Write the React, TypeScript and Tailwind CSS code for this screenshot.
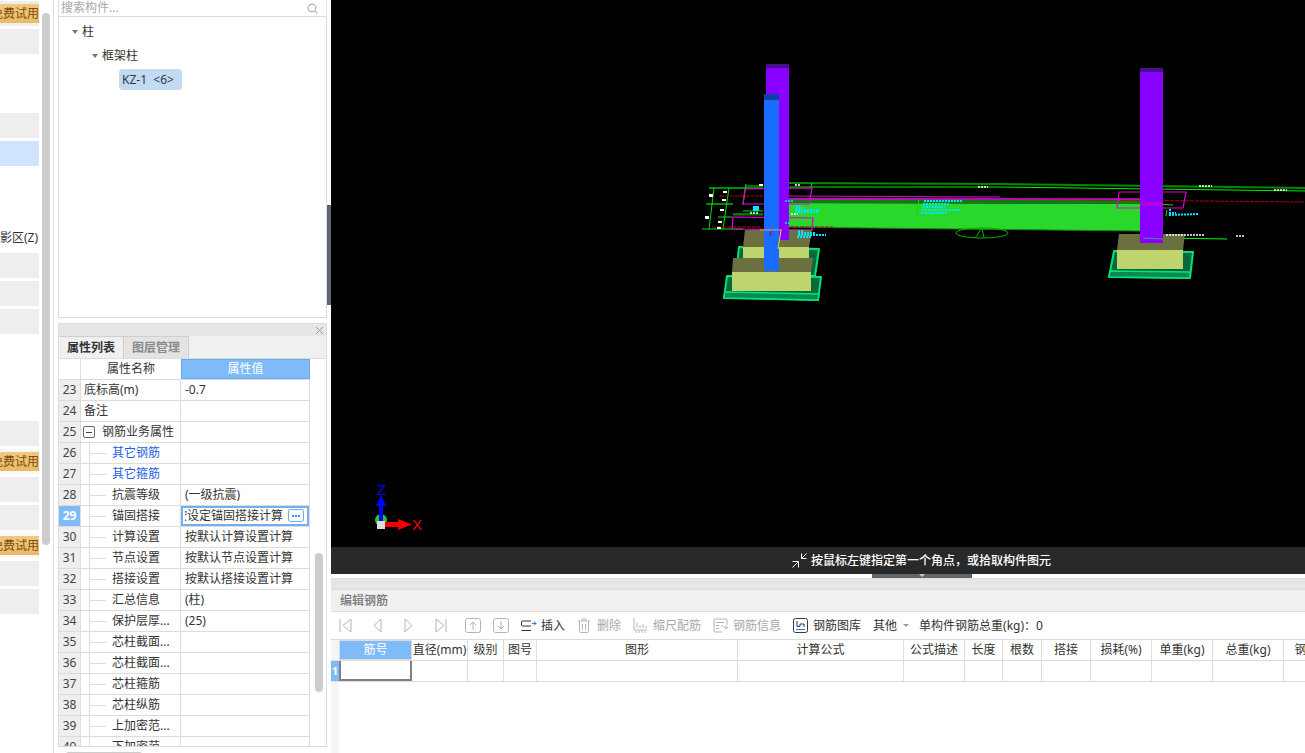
const sideRows = [
  "badge", "gray", "", "", "gray", "blue", "", "", "text", "gray", "gray", "gray", "", "", "", "gray",
  "badge2", "gray", "gray", "badge2", "gray", "gray",
];

type PropRow = { no: number; name: string; value?: string; kind?: "top" | "group" | "link" | "child" };

const propRows: PropRow[] = [
  { no: 23, name: "底标高(m)", value: "-0.7", kind: "top" },
  { no: 24, name: "备注", kind: "top" },
  { no: 25, name: "钢筋业务属性", kind: "group" },
  { no: 26, name: "其它钢筋", kind: "link" },
  { no: 27, name: "其它箍筋", kind: "link" },
  { no: 28, name: "抗震等级", value: "(一级抗震)" },
  { no: 29, name: "锚固搭接", value: "按设定锚固搭接计算" },
  { no: 30, name: "计算设置", value: "按默认计算设置计算" },
  { no: 31, name: "节点设置", value: "按默认节点设置计算" },
  { no: 32, name: "搭接设置", value: "按默认搭接设置计算" },
  { no: 33, name: "汇总信息", value: "(柱)" },
  { no: 34, name: "保护层厚...", value: "(25)" },
  { no: 35, name: "芯柱截面..." },
  { no: 36, name: "芯柱截面..." },
  { no: 37, name: "芯柱箍筋" },
  { no: 38, name: "芯柱纵筋" },
  { no: 39, name: "上加密范..." },
  { no: 40, name: "下加密范..." },
];

const rebarCols = [
  { label: "筋号", w: "w-[73px]" },
  { label: "直径(mm)", w: "w-[56px]" },
  { label: "级别", w: "w-[36px]" },
  { label: "图号", w: "w-[33px]" },
  { label: "图形", w: "w-[201px]" },
  { label: "计算公式", w: "w-[166px]" },
  { label: "公式描述", w: "w-[61px]" },
  { label: "长度", w: "w-[38px]" },
  { label: "根数", w: "w-[39px]" },
  { label: "搭接", w: "w-[49px]" },
  { label: "损耗(%)", w: "w-[61px]" },
  { label: "单重(kg)", w: "w-[61px]" },
  { label: "总重(kg)", w: "w-[71px]" },
  { label: "钢筋归类", w: "w-[70px]" },
];

const LeftStrip = () => (
  <div className="relative w-[54px] shrink-0 h-full border-r border-[#dcdcdc] bg-white">
    <div className="w-[39px] pt-px flex flex-col gap-[3px] overflow-hidden">
      {sideRows.map((kind, i) => (
        <div
          key={i}
          className={
            "h-[25px] shrink-0 flex items-center justify-end overflow-hidden whitespace-nowrap text-xs " +
            (kind === "gray" || kind === "badge" ? "bg-[#eeeeee] " : "") +
            (kind === "blue" ? "bg-[#cfe5ff] " : "") +
            (kind === "badge2" ? "bg-[#f7f7f7] " : "")
          }
        >
          {(kind === "badge" || kind === "badge2") && (
            <span className="h-[19px] w-full flex items-center justify-end bg-gradient-to-b from-[#f0c97f] to-[#e9bb66] text-[#7c4a10] leading-none overflow-hidden">
              <span className="shrink-0">免费试用</span>
            </span>
          )}
          {kind === "text" && <span className="shrink-0 mr-px text-[#333]">影区(Z)</span>}
        </div>
      ))}
    </div>
    <div className="absolute left-[42px] top-[13px] w-[8px] h-[532px] rounded bg-[#cccccc]" />
  </div>
);

const TreePanel = () => (
  <>
    <div className="h-[16px] flex items-center justify-between border-x border-[#e2e2e2] pl-[2px] pr-[8px] text-xs text-[#a8a8a8]">
      <span>搜索构件...</span>
      <svg width="11" height="11" viewBox="0 0 11 11" fill="none" stroke="#b0b0b0" strokeWidth="1.2">
        <circle cx="5" cy="5" r="3.8" />
        <path d="M8 8l2.4 2.4" />
      </svg>
    </div>
    <div className="h-[302px] border border-[#dcdcdc] text-xs text-[#333] relative">
      <div className="pl-[13px] h-[19px] flex items-center gap-[4px] mt-[5px]">
        <span className="w-0 h-0 border-x-[3px] border-x-transparent border-t-[4px] border-t-[#777]" />
        <span>柱</span>
      </div>
      <div className="pl-[33px] h-[19px] flex items-center gap-[4px] mt-[5px]">
        <span className="w-0 h-0 border-x-[3px] border-x-transparent border-t-[4px] border-t-[#777]" />
        <span>框架柱</span>
      </div>
      <div className="ml-[60px] mt-[4px] w-[63px] h-[21px] pl-[3px] flex items-center rounded bg-[#c3daf3] whitespace-pre text-[#2b3a4a]">
        KZ-1{"  "}&lt;6&gt;
      </div>
    </div>
  </>
);

const PropValue = ({ row }: { row: PropRow }) => {
  if (row.no === 29) {
    return (
      <div className="relative h-full w-full border-2 border-[#6fb0f5] bg-white flex items-center">
        <div className="ml-[2px] flex-1 overflow-hidden">
          <div className="whitespace-nowrap ml-[-10px]">{row.value}</div>
        </div>
        <span className="absolute right-[3px] top-[1px] w-[16px] h-[13px] bg-white border border-[#6fb0f5] rounded-[2px] flex items-center justify-center gap-px">
          <i className="w-[2px] h-[2px] bg-[#3d8df0]" />
          <i className="w-[2px] h-[2px] bg-[#3d8df0]" />
          <i className="w-[2px] h-[2px] bg-[#3d8df0]" />
        </span>
      </div>
    );
  }
  return <div className="pl-[4px] whitespace-nowrap">{row.value}</div>;
};

const PropName = ({ row }: { row: PropRow }) => {
  if (row.kind === "top") return <span className="pl-[3px]">{row.name}</span>;
  if (row.kind === "group") {
    return (
      <div className="flex items-center pl-[2px] gap-[7px]">
        <span className="w-[12px] h-[12px] border border-[#666] rounded-[2px] flex items-center justify-center">
          <i className="w-[6px] h-px bg-[#444]" />
        </span>
        <span>{row.name}</span>
      </div>
    );
  }
  return (
    <div className="flex items-center h-full">
      <span className="ml-[8px] w-px h-full bg-[#dddddd]" />
      <span className="w-[16px] h-px bg-[#dddddd]" />
      <span className={"ml-[6px] " + (row.kind === "link" ? "text-[#1f5fe0]" : "")}>{row.name}</span>
    </div>
  );
};

const PropertyPanel = () => (
  <div className="mt-[5px] h-[424px] flex flex-col border-x border-b border-t border-[#dcdcdc] text-xs text-[#333] overflow-hidden">
    <div className="h-[12px] shrink-0 bg-[#e6e6e6] flex items-center justify-end pr-[2px]">
      <svg width="9" height="9" viewBox="0 0 9 9" stroke="#999" strokeWidth="1">
        <path d="M1 1l7 7M8 1l-7 7" />
      </svg>
    </div>
    <div className="h-[23px] shrink-0 bg-[#f0f0f0] flex border-b border-[#dcdcdc]">
      <div className="w-[65px] border-t border-r border-[#cfcfcf] flex items-center justify-center font-bold text-[#333]">属性列表</div>
      <div className="w-[65px] border-t border-r border-[#cfcfcf] bg-[#e4e4e4] flex items-center justify-center font-bold text-[#8a8a8a]">图层管理</div>
    </div>
    <div className="flex-1 flex min-h-0">
      <div className="w-[251px] shrink-0 overflow-hidden">
        <div className="h-[21px] flex border-b border-[#dcdcdc]">
          <div className="w-[22px] border-r border-[#dcdcdc]" />
          <div className="w-[100px] flex items-center justify-center">属性名称</div>
          <div className="w-[129px] bg-[#80bbf9] border border-[#67a9f0] flex items-center justify-center text-white">属性值</div>
        </div>
        {propRows.map((row) => (
          <div key={row.no} className="h-[21px] flex items-stretch border-b border-[#dcdcdc]">
            <div
              className={
                "w-[22px] shrink-0 flex items-center justify-center border-r border-[#dcdcdc] " +
                (row.no === 29 ? "bg-[#7fbaf9] text-white font-bold" : "bg-[#eeeeee] text-[#444]")
              }
            >
              {row.no}
            </div>
            <div className="w-[100px] shrink-0 flex items-center border-r border-[#dcdcdc] whitespace-nowrap overflow-hidden">
              <PropName row={row} />
            </div>
            <div className="w-[129px] shrink-0 flex items-center border-r border-[#dcdcdc] overflow-hidden">
              <PropValue row={row} />
            </div>
          </div>
        ))}
      </div>
      <div className="flex-1 pl-[5px] pt-[194px]">
        <div className="w-[8px] h-[139px] rounded bg-[#cccccc]" />
      </div>
    </div>
  </div>
);

const Dash = ({ d, c = "#00e5ff", w = 1.5 }: { d: string; c?: string; w?: number }) => (
  <path d={d} stroke={c} strokeWidth={w} strokeDasharray="2 1" fill="none" />
);

const ModelView = () => (
  <div className="h-[547px] bg-black overflow-hidden">
    <svg width="974" height="547" viewBox="331 0 974 547" className="block">
      {/* beam */}
      <polygon points="788,198 1140,199 1140,204 788,203" fill="#127a12" />
      <polygon points="780,203 1140,204 1140,231 780,227" fill="#29d82a" />
      <path d="M780,227 L1140,231" stroke="#128a12" strokeWidth="1" />
      {/* green axis lines */}
      <g stroke="#00e000" strokeWidth="1" fill="none">
        <path d="M709,188 L763,188" stroke="#008a00" strokeWidth="2" />
        <path d="M745,186 L763,186" />
        <path d="M706,204 L733,204" stroke="#008a00" strokeWidth="2" />
        <path d="M702,229 L743,229" />
        <path d="M718,217 L732,217" />
        <path d="M733,214 L763,214" />
        <path d="M733,215 L763,215" stroke="#008a00" />
        <path d="M743,211 L763,211" />
        <path d="M714,188 L709,229" />
        <path d="M729,188 L723,229" />
        <path d="M746,184 L743,205" />
        <path d="M788,187 L1000,187 L1305,191" stroke="#00f000" />
        <path d="M788,183 L1000,184 L1305,188" stroke="#008a00" strokeWidth="2" />
        <path d="M812,183 L811,188" />
        <path d="M919,199 L917,214" />
        <path d="M780,214 L790,214" />
        <path d="M780,223 L790,223" />
        <path d="M1167,210 L1166,216" />
        <path d="M1163,238 L1227,239" stroke="#00ff00" />
        <path d="M1156,204 L1173,205" />
        <ellipse cx="982" cy="233" rx="26" ry="5" stroke="#00b000" />
        <path d="M975,238 L982,228 L984,238" stroke="#00b000" />
        <path d="M795,230 L794,238" />
      </g>
      {/* dark red lines */}
      <g stroke="#b00010" strokeWidth="1" fill="none" strokeDasharray="4 1">
        <path d="M720,196 L763,196" />
        <path d="M712,227 L763,227" />
        <path d="M780,227 L833,227" />
        <path d="M1000,199 L1305,202" />
        <path d="M1151,203 L1148,215" />
      </g>
      {/* magenta outlines */}
      <g stroke="#e000d8" strokeWidth="1.2" fill="none">
        <polygon points="745,189 812,188 809,204 743,204" />
        <polygon points="733,217 813,218 812,230 732,229" />
        <polygon points="1119,192 1186,192 1183,208 1117,208" />
        <path d="M782,199 L1140,199" strokeWidth="1.5" />
        <path d="M782,196 L1000,197" />
      </g>
      {/* left footing */}
      <polygon points="727,276 821,277 818,300 724,298" fill="#06693a" stroke="#00e27a" strokeWidth="2" strokeLinejoin="round" />
      <polygon points="725,292 819,294 818,300 724,298" fill="#0a8a50" stroke="#00e27a" strokeWidth="1.5" strokeLinejoin="round" />
      <polygon points="739,247 819,249 815,276 736,274" fill="#06693a" stroke="#00e27a" strokeWidth="2" strokeLinejoin="round" />
      <polygon points="745,230 812,230 809,247 743,247" fill="#6c6f40" />
      <rect x="743" y="247" width="66" height="12" fill="#bdd56c" />
      <polygon points="733,258 813,258 811,272 732,272" fill="#6c6f40" />
      <rect x="732" y="272" width="79" height="19" fill="#bdd56c" />
      {/* right footing */}
      <polygon points="1114,251 1193,252 1190,278 1109,277" fill="#06693a" stroke="#00e27a" strokeWidth="2" strokeLinejoin="round" />
      <polygon points="1110,271 1190,272 1190,278 1109,277" fill="#0a8a50" stroke="#00e27a" strokeWidth="1.5" strokeLinejoin="round" />
      <polygon points="1119,234 1185,234 1183,250 1117,250" fill="#6c6f40" />
      <rect x="1117" y="250" width="66" height="19" fill="#bdd56c" />
      {/* columns */}
      <rect x="766" y="64" width="23" height="4" fill="#45108a" />
      <rect x="766" y="68" width="23" height="172" fill="#8800ff" />
      <rect x="1140" y="68" width="23" height="4" fill="#45108a" />
      <rect x="1140" y="72" width="23" height="171" fill="#8800ff" />
      <rect x="764" y="94" width="15" height="6" fill="#0c3fa5" />
      <rect x="764" y="100" width="15" height="171" fill="#1a6cff" />
      <path d="M760,230 L782,230" stroke="#e0a060" strokeWidth="1" />
      <path d="M781,230 L778,249" stroke="#e0e000" strokeWidth="1" />
      <path d="M771,231 L770,236" stroke="#c00010" strokeWidth="1" />
      <path d="M1143,238 L1163,239" stroke="#5a8a9a" strokeWidth="1" />
      <polygon points="1140,202 1163,202 1163,206 1140,206" fill="#b000e0" />
      {/* cad notes */}
      <rect x="753" y="206" width="6" height="5" fill="#00e5ff" />
      <Dash d="M796,206 L800,206 M796,208 L803,208 M795,210 L820,210 M795,212 L818,212" w={2} />
      <Dash d="M798,231 L803,231 M798,233 L815,233 M798,235 L826,235 M797,237 L812,237" w={2} />
      <Dash d="M924,201 L963,201 M923,204 L950,204 M923,207 L945,207 M922,210 L960,210 M921,213 L948,213" w={2} />
      <Dash d="M1169,210 L1172,210 M1169,213 L1176,213 M1169,215 L1198,214" w={2} />
      <Dash d="M785,201 L793,201 M785,223 L790,223" />
      <Dash d="M750,213 L758,213 M791,214 L798,214" c="#ffffff" />
      <Dash d="M795,185 L800,185 M978,187 L988,187 M1199,186 L1212,186 M1274,190 L1287,190" c="#ffffff" />
      <Dash d="M1166,235 L1205,235 M1236,236 L1244,236" c="#ffffff" />
      <g fill="#ffffff">
        <rect x="709" y="194" width="4" height="3" />
        <rect x="723" y="191" width="4" height="2" />
        <rect x="722" y="199" width="4" height="2" />
        <rect x="720" y="209" width="4" height="2" />
        <rect x="705" y="216" width="4" height="3" />
        <rect x="718" y="221" width="4" height="2" />
        <rect x="717" y="227" width="4" height="2" />
        <rect x="759" y="184" width="4" height="2" />
      </g>
      {/* axis gizmo */}
      <ellipse cx="381" cy="520" rx="6" ry="6" fill="#1fc83a" />
      <polygon points="379,503 383,503 383,521 379,521" fill="#0000ff" />
      <polygon points="381,495 386,506 376,506" fill="#0000ff" />
      <rect x="385" y="522" width="14" height="5" fill="#ee0000" />
      <polygon points="398,519 412,524.5 398,530" fill="#ee0000" />
      <rect x="377" y="521" width="8" height="8" fill="#dddddd" />
      <text x="377" y="495" fill="#0000ff" fontSize="15" fontFamily="Liberation Sans, sans-serif">Z</text>
      <text x="412" y="530" fill="#ee0000" fontSize="15" fontFamily="Liberation Sans, sans-serif">X</text>
    </svg>
  </div>
);

const StatusBar = () => (
  <div className="h-[27px] bg-[#292929] flex items-center pl-[461px] text-xs font-medium text-white">
    <svg width="15" height="15" viewBox="0 0 15 15" stroke="#fff" strokeWidth="1" fill="none" className="mr-[4px]">
      <path d="M14.5 0.5L9.5 5.5M9.5 0.5v5h5M0.5 14.5l6-6M0.5 8.5h6v6" />
    </svg>
    按鼠标左键指定第一个角点，或拾取构件图元
  </div>
);

const NavIcon = ({ d, cls }: { d: string; cls: string }) => (
  <svg width="14" height="15" viewBox="0 0 14 15" fill="none" stroke="#b5b5b5" strokeWidth="1" className={cls}>
    <path d={d} />
  </svg>
);

const BoxArrow = ({ up, cls }: { up?: boolean; cls: string }) => (
  <svg width="16" height="15" viewBox="0 0 16 15" fill="none" stroke="#b5b5b5" strokeWidth="1" className={cls}>
    <rect x="0.5" y="0.5" width="15" height="14" rx="2" />
    <path d={up ? "M8 12V4M5 7l3-3 3 3" : "M8 3v8M5 8l3 3 3-3"} />
  </svg>
);

const RebarToolbar = () => (
  <div className="h-[27px] flex items-center text-xs whitespace-nowrap text-[#333]">
    <NavIcon d="M1 1v13M12 1L4 7.5l8 6.5z" cls="ml-[8px]" />
    <NavIcon d="M10 1L3 7.5l7 6.5z" cls="ml-[18px]" />
    <NavIcon d="M4 1l7 6.5-7 6.5z" cls="ml-[16px]" />
    <NavIcon d="M2 1l8 6.5-8 6.5zM12 1v13" cls="ml-[19px]" />
    <BoxArrow up cls="ml-[17px]" />
    <BoxArrow cls="ml-[12px]" />
    <svg width="16" height="12" viewBox="0 0 16 12" fill="none" stroke="#333" className="ml-[12px]">
      <path d="M10 1H1.5a1 1 0 00-1 1v3a1 1 0 001 1H10M0.5 10.5H10" />
      <path d="M11 3.5h4M13 1.5l2 2-2 2" stroke="#1f7ae0" />
    </svg>
    <span className="ml-[4px]">插入</span>
    <svg width="12" height="15" viewBox="0 0 12 15" fill="none" stroke="#b5b5b5" className="ml-[13px]">
      <path d="M0 3h12M4 3V1h4v2M1.5 3v10.5a1 1 0 001 1h7a1 1 0 001-1V3M4.5 6v6M7.5 6v6" />
    </svg>
    <span className="ml-[7px] text-[#a8a8a8]">删除</span>
    <svg width="14" height="15" viewBox="0 0 14 15" fill="none" stroke="#b5b5b5" className="ml-[12px]">
      <path d="M1 0v12h13M4 5v5M7 7v3M10 6v4M13 8v2" />
      <path d="M2 14h12" strokeDasharray="2 1" />
    </svg>
    <span className="ml-[6px] text-[#a8a8a8]">缩尺配筋</span>
    <svg width="15" height="15" viewBox="0 0 15 15" fill="none" stroke="#b5b5b5" className="ml-[12px]">
      <path d="M14 7V2a1 1 0 00-1-1H2a1 1 0 00-1 1v11a1 1 0 001 1h7M3 4.5h8M3 7.5h3M3 10.5h3M8 8h3M11 9l2 2 2-2M13 11V7.5" />
    </svg>
    <span className="ml-[5px] text-[#a8a8a8]">钢筋信息</span>
    <svg width="15" height="15" viewBox="0 0 15 15" fill="none" stroke="#2f3b52" className="ml-[12px]">
      <rect x="0.5" y="0.5" width="14" height="14" rx="2" />
      <path d="M4 3v5.5h3M7 8.5V6h4v3" />
      <path d="M3 11.5h9" stroke="#1f7ae0" />
    </svg>
    <span className="ml-[5px]">钢筋图库</span>
    <span className="ml-[12px]">其他</span>
    <span className="ml-[6px] w-0 h-0 border-x-[3px] border-x-transparent border-t-[3px] border-t-[#999]" />
    <span className="ml-[10px]">单构件钢筋总重(kg)：0</span>
  </div>
);

const RebarPanel = () => (
  <div className="flex-1 min-h-0 flex flex-col overflow-hidden">
    <div className="h-[4px] shrink-0 bg-white">
      <div className="ml-[541px] w-[100px] h-full bg-[#5e6670] flex justify-center">
        <i className="w-0 h-0 border-x-[3px] border-x-transparent border-t-[3px] border-t-[#c8c8c8]" />
      </div>
    </div>
    <div className="h-[12px] shrink-0 bg-[#e6e6e6] border-y border-[#dcdcdc]" />
    <div className="h-[22px] shrink-0 bg-[#f0f0f0] border-b border-[#dcdcdc] pl-[9px] flex items-center text-xs font-medium text-[#777]">
      编辑钢筋
    </div>
    <RebarToolbar />
    <div className="flex-1 flex flex-col overflow-hidden text-xs text-[#333] border-t border-[#dcdcdc]">
      <div className="h-[21px] flex whitespace-nowrap border-b border-[#dcdcdc]">
        <div className="w-[8px] shrink-0 bg-[#f5f5f5]" />
        {rebarCols.map((c, i) => (
          <div
            key={c.label}
            className={
              c.w +
              " shrink-0 flex items-center justify-center border-r border-[#dcdcdc] " +
              (i === 0 ? "bg-[#80bbf9] text-white border border-[#67a9f0]" : "")
            }
          >
            {c.label}
          </div>
        ))}
      </div>
      <div className="h-[21px] flex border-b border-[#dcdcdc]">
        <div className="w-[8px] shrink-0 bg-[#7fbaf9] text-white font-bold text-[11px] flex items-center justify-center">1</div>
        {rebarCols.map((c, i) => (
          <div
            key={c.label}
            className={c.w + " shrink-0 " + (i === 0 ? "border-2 border-[#808080] border-t-0" : "border-r border-[#dcdcdc]")}
          />
        ))}
      </div>
      <div className="flex-1 w-[8px] bg-[#f5f5f5]" />
    </div>
  </div>
);

export default function App() {
  return (
    <div className="w-[1305px] h-[753px] flex overflow-hidden bg-white font-['Noto_Sans','Noto_Sans_CJK_SC',sans-serif]">
      <LeftStrip />
      <div className="ml-[4px] w-[269px] shrink-0 h-full">
        <TreePanel />
        <PropertyPanel />
        <div className="ml-[7px] mt-[5px] w-[78px] h-[4px] rounded-t border border-[#cccccc]" />
      </div>
      <div className="w-[4px] shrink-0 h-full bg-white pt-[205px]">
        <div className="h-[100px] bg-[#5e6670]" />
      </div>
      <div className="flex-1 min-w-0 h-full flex flex-col">
        <ModelView />
        <StatusBar />
        <RebarPanel />
      </div>
    </div>
  );
}
